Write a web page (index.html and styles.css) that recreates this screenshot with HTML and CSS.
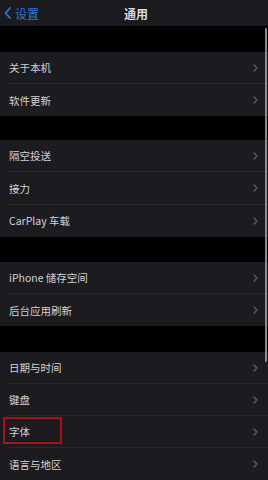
FILE: index.html
```html
<!DOCTYPE html>
<html lang="zh-CN">
<head>
    <meta charset="UTF-8">
    <meta name="viewport" content="width=device-width, initial-scale=1.0">
    <title>通用</title>
    <link rel="stylesheet" href="styles.css">
</head>
<body>
    <div class="nav">
        <div class="back">
            <svg width="7" height="12" viewBox="0 0 7 12"><path d="M6 1 L1.5 6 L6 11" fill="none" stroke="#2f78d8" stroke-width="1.8" stroke-linecap="round" stroke-linejoin="round"/></svg>
            <span>设置</span>
        </div>
        <div class="title">通用</div>
    </div>

    <div class="group g1">
        <div class="row"><span class="label">关于本机</span><svg class="chev" viewBox="0 0 5 8"><path d="M1 1 L4 4 L1 7"/></svg></div>
        <div class="row"><span class="label">软件更新</span><svg class="chev" viewBox="0 0 5 8"><path d="M1 1 L4 4 L1 7"/></svg></div>
    </div>

    <div class="group g2">
        <div class="row"><span class="label">隔空投送</span><svg class="chev" viewBox="0 0 5 8"><path d="M1 1 L4 4 L1 7"/></svg></div>
        <div class="row"><span class="label">接力</span><svg class="chev" viewBox="0 0 5 8"><path d="M1 1 L4 4 L1 7"/></svg></div>
        <div class="row"><span class="label">CarPlay 车载</span><svg class="chev" viewBox="0 0 5 8"><path d="M1 1 L4 4 L1 7"/></svg></div>
    </div>

    <div class="group g3">
        <div class="row"><span class="label">iPhone 储存空间</span><svg class="chev" viewBox="0 0 5 8"><path d="M1 1 L4 4 L1 7"/></svg></div>
        <div class="row"><span class="label">后台应用刷新</span><svg class="chev" viewBox="0 0 5 8"><path d="M1 1 L4 4 L1 7"/></svg></div>
    </div>

    <div class="group g4">
        <div class="row"><span class="label">日期与时间</span><svg class="chev" viewBox="0 0 5 8"><path d="M1 1 L4 4 L1 7"/></svg></div>
        <div class="row"><span class="label">键盘</span><svg class="chev" viewBox="0 0 5 8"><path d="M1 1 L4 4 L1 7"/></svg></div>
        <div class="row"><span class="label">字体</span><svg class="chev" viewBox="0 0 5 8"><path d="M1 1 L4 4 L1 7"/></svg><div class="mark"></div></div>
        <div class="row"><span class="label">语言与地区</span><svg class="chev" viewBox="0 0 5 8"><path d="M1 1 L4 4 L1 7"/></svg></div>
    </div>

    <div class="scrollbar"></div>
</body>
</html>
```

FILE: styles.css
```css
body {
    margin: 0;
    width: 268px;
    height: 480px;
    overflow: hidden;
    background: #000;
    font-family: "Noto Sans CJK SC", "Noto Sans", sans-serif;
    color: #d2d2d4;
    position: relative;
}

.nav {
    height: 26px;
    background: #1b1a1e;
    display: flex;
    align-items: center;
    position: relative;
}

.back {
    display: flex;
    align-items: center;
    gap: 4px;
    padding-left: 4px;
    color: #2f78d8;
    font-size: 12px;
}

.title {
    position: absolute;
    left: 0;
    right: 0;
    text-align: center;
    font-size: 12px;
    font-weight: 700;
    color: #dcdcde;
    padding-left: 4px;
}

.group {
    background: #1c1b20;
}

.g1 { margin-top: 26px; }
.g2 { margin-top: 24px; }
.g3 { margin-top: 25px; }
.g4 { margin-top: 26px; }

.row {
    height: 32px;
    margin-left: 9px;
    padding-right: 10px;
    display: flex;
    align-items: center;
    justify-content: space-between;
    border-bottom: 1px solid #2a292e;
    box-sizing: border-box;
    position: relative;
    font-size: 10.5px;
}

.g2 .row { height: 32.4px; }

.row:last-child {
    border-bottom: none;
}

.chev {
    width: 5px;
    height: 8px;
    fill: none;
    stroke: #5e5d62;
    stroke-width: 1.4;
    stroke-linecap: round;
    stroke-linejoin: round;
}

.mark {
    position: absolute;
    left: -6px;
    top: 1px;
    width: 59px;
    height: 27px;
    border: 2px solid #a3141c;
    box-sizing: border-box;
}

.scrollbar {
    position: absolute;
    right: 1px;
    top: 28px;
    width: 2px;
    height: 334px;
    background: #8a898e;
    border-radius: 1px;
}
```
